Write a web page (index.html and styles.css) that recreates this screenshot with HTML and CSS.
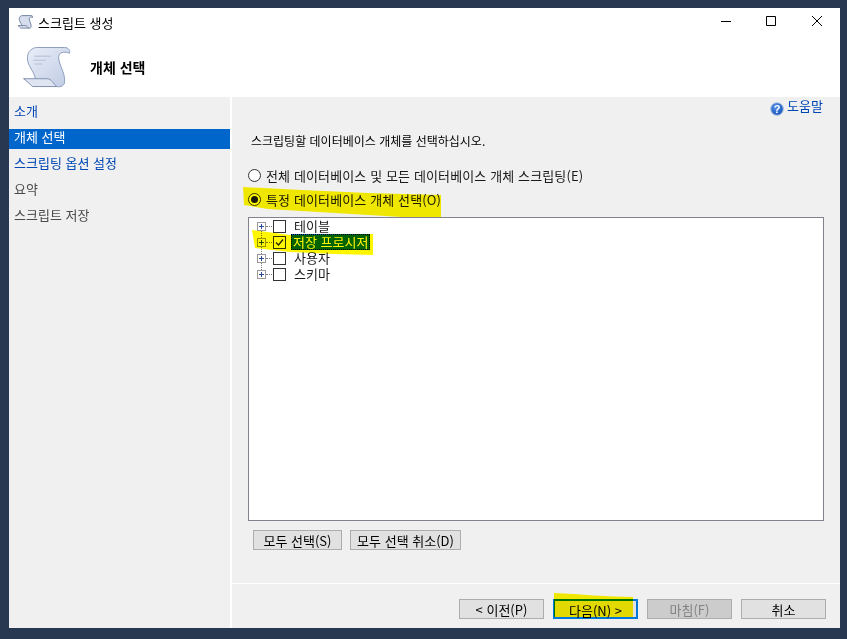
FILE: index.html
```html
<!DOCTYPE html>
<html lang="ko">
<head>
    <meta charset="UTF-8">
    <meta name="viewport" content="width=device-width, initial-scale=1.0">
    <title>스크립트 생성</title>
    <link rel="stylesheet" href="styles.css">
</head>
<body>

    <div class="window">
        <!-- Title bar -->
        <div class="titlebar">
            <svg class="title-icon" width="15" height="14" viewBox="0 0 48 41">
                <path d="M14 0 H42 C46 0 48 3 47 6 C44 4 37 4 36 9 C35 16 43 26 42 35 C42 39 38 41 34 40 L12 32 C11 24 3 18 4 10 C4 4 9 0 14 0 Z" fill="#d6deee" stroke="#6f7f9f" stroke-width="3"/>
                <path d="M0 32 H24 C29 32 30 37 34 40 H9 C6 37 3 34 0 32 Z" fill="#dfe6f2" stroke="#6f7f9f" stroke-width="3"/>
            </svg>
            <span class="title-text">스크립트 생성</span>
            <div class="win-buttons">
                <svg width="12" height="12" viewBox="0 0 12 12"><path d="M2 5.5 H12" stroke="#000"/></svg>
                <svg width="12" height="12" viewBox="0 0 12 12"><path d="M1.5 0.5 H10.5 V9.5 H1.5 Z" stroke="#000" fill="none"/></svg>
                <svg width="12" height="12" viewBox="0 0 12 12"><path d="M1 0 L11 10 M11 0 L1 10" stroke="#000" fill="none"/></svg>
            </div>
        </div>

        <!-- Page header -->
        <div class="page-header">
            <svg class="header-icon" width="48" height="41" viewBox="-0.5 -0.5 49 42">
                <defs>
                    <linearGradient id="paper" x1="0" y1="0" x2="1" y2="1">
                        <stop offset="0" stop-color="#e9eef8"/>
                        <stop offset="1" stop-color="#bfcbe3"/>
                    </linearGradient>
                </defs>
                <path d="M14 0 H42 C46 0 48 3 47 6 C44 4 37 4 36 9 C35 16 43 26 42 35 C42 39 38 41 34 40 L12 32 C11 24 3 18 4 10 C4 4 9 0 14 0 Z" fill="url(#paper)" stroke="#8d9cbc"/>
                <path d="M0 32 H24 C29 32 30 37 34 40 H9 C6 37 3 34 0 32 Z" fill="#dfe6f2" stroke="#7f8fb0"/>
                <path d="M11 9 H28 M10 13 H23 M11 17 H19" stroke="#c2cbdd" stroke-width="1.5"/>
            </svg>
            <span class="header-title">개체 선택</span>
        </div>

        <div class="main">
            <!-- Step list -->
            <div class="sidebar">
                <div class="step link">소개</div>
                <div class="step selected">개체 선택</div>
                <div class="step link">스크립팅 옵션 설정</div>
                <div class="step">요약</div>
                <div class="step">스크립트 저장</div>
            </div>

            <div class="content">
                <div class="content-body">
                    <div class="help-row">
                        <svg class="help-icon" width="14" height="14" viewBox="0 0 14 14">
                            <defs>
                                <radialGradient id="orb" cx="0.4" cy="0.35" r="0.7">
                                    <stop offset="0" stop-color="#4f8fe8"/>
                                    <stop offset="1" stop-color="#1c55b8"/>
                                </radialGradient>
                            </defs>
                            <circle cx="7" cy="7" r="6.3" fill="url(#orb)" stroke="#a9c0e4"/>
                            <text x="7" y="10.5" class="help-mark">?</text>
                        </svg>
                        <span class="help-text">도움말</span>
                    </div>
                    <p class="prompt">스크립팅할 데이터베이스 개체를 선택하십시오.</p>

                    <label class="radio-row">
                        <span class="radio"></span>전체 데이터베이스 및 모든 데이터베이스 개체 스크립팅(E)
                    </label>
                    <label class="radio-row">
                        <span class="radio checked"></span>특정 데이터베이스 개체 선택(O)
                    </label>

                    <div class="tree">
                        <div class="tree-row"><span class="expander"></span><span class="dots"></span><span class="check"></span><span class="node">테이블</span></div>
                        <div class="tree-row"><span class="expander"></span><span class="dots"></span><span class="check on">
                            <svg width="13" height="13" viewBox="0 0 13 13"><path d="M3 6.5 L5.5 9 L10 3.5" stroke="#222" stroke-width="1.3" fill="none"/></svg>
                        </span><span class="node picked">저장 프로시저</span></div>
                        <div class="tree-row"><span class="expander"></span><span class="dots"></span><span class="check"></span><span class="node">사용자</span></div>
                        <div class="tree-row last"><span class="expander"></span><span class="dots"></span><span class="check"></span><span class="node">스키마</span></div>
                    </div>

                    <div class="select-buttons">
                        <button class="btn select-all">모두 선택(S)</button>
                        <button class="btn select-none">모두 선택 취소(D)</button>
                    </div>
                </div>

                <div class="footer">
                    <button class="btn wide">&lt; 이전(P)</button>
                    <button class="btn wide default">다음(N) &gt;</button>
                    <button class="btn wide disabled">마침(F)</button>
                    <button class="btn wide">취소</button>
                </div>
            </div>
        </div>

        <!-- Yellow marker strokes drawn over the dialog -->
        <svg class="marker" width="831" height="620" viewBox="0 0 831 620">
            <path d="M234 179 L293 182 L359 185 L432 187 L432 209 L393 209 L326 205 L259 201 L235 197 Z"/>
            <path d="M243 222 L281 227 L364 226 L364 247 L326 246 L281 244 L246 240 Z"/>
            <path d="M545 585 C570 586 600 589 624 589 L624 609 L545 609 Z"/>
        </svg>
    </div>

</body>
</html>
```

FILE: styles.css
```css
body {
    margin: 0;
    background-color: #283850;
    font-family: "Noto Sans CJK KR", "Liberation Sans", sans-serif;
    font-size: 13px;
    color: #1a1a1a;
}
.window {
    position: relative;
    width: 831px;
    height: 620px;
    margin: 8px 0 0 9px;
    background-color: #ffffff;
    display: flex;
    flex-direction: column;
}
.titlebar {
    height: 28px;
    display: flex;
    align-items: center;
    padding-left: 9px;
}
.title-icon {
    margin-right: 5px;
}
.title-text {
    color: #000000;
}
.win-buttons {
    margin-left: auto;
    display: flex;
    gap: 34px;
    padding-right: 17px;
}
.win-buttons svg {
    display: block;
}
.page-header {
    height: 61px;
    display: flex;
    align-items: center;
    padding-left: 14px;
}
.header-icon {
    margin-top: 1px;
}
.header-title {
    margin-left: 19px;
    font-size: 14px;
    font-weight: bold;
    color: #000000;
}
.main {
    flex: 1;
    display: flex;
    gap: 2px;
    min-height: 0;
}
.sidebar {
    width: 221px;
    background-color: #f0f0f0;
    padding-top: 4px;
    display: flex;
    flex-direction: column;
}
.step {
    height: 20px;
    line-height: 19px;
    margin-bottom: 6px;
    padding-left: 5px;
    color: #4a4a4a;
}
.step.link {
    color: #0046b4;
}
.step.selected {
    margin-top: 2px;
    margin-bottom: 4px;
    background-color: #0066cc;
    color: #ffffff;
    line-height: 16px;
}
.content {
    flex: 1;
    background-color: #f0f0f0;
    display: flex;
    flex-direction: column;
}
.content-body {
    flex: 1;
    padding: 0 16px;
    border-bottom: 1px solid #ffffff;
}
.help-row {
    display: flex;
    justify-content: flex-end;
    align-items: center;
    gap: 3px;
    height: 20px;
    margin-top: 1px;
    margin-bottom: 15px;
    padding-right: 1px;
}
.help-icon {
    margin-top: 2px;
}
.help-text {
    margin-top: -2px;
    margin-bottom: 4px;
    color: #0046b4;
}
.help-mark {
    font-family: "Liberation Sans", sans-serif;
    font-size: 11px;
    font-weight: bold;
    fill: #ffffff;
    text-anchor: middle;
}
.prompt {
    margin: 0 0 15px 3px;
    font-size: 12px;
    line-height: 16px;
    color: #000000;
}
.radio-row {
    display: flex;
    align-items: center;
    height: 24px;
    box-sizing: border-box;
    padding-bottom: 2px;
    letter-spacing: 0.12px;
    color: #1a1a1a;
}
.radio {
    width: 11px;
    height: 11px;
    border: 1px solid #333333;
    border-radius: 50%;
    background-color: #ffffff;
    margin-top: 1px;
    margin-right: 5px;
    position: relative;
}
.radio.checked::after {
    content: "";
    position: absolute;
    left: 2px;
    top: 2px;
    width: 7px;
    height: 7px;
    border-radius: 50%;
    background-color: #1a1a1a;
}
.tree {
    height: 302px;
    margin-top: 5px;
    background-color: #ffffff;
    border: 1px solid #82828c;
    padding-left: 8px;
}
.tree-row {
    display: flex;
    align-items: center;
    height: 16px;
}
.expander {
    position: relative;
    width: 7px;
    height: 7px;
    border: 1px solid #9a9a9a;
    background:
        linear-gradient(#2b4a90, #2b4a90) center / 5px 1px no-repeat,
        linear-gradient(#2b4a90, #2b4a90) center / 1px 5px no-repeat;
}
.expander::after {
    content: "";
    position: absolute;
    left: 3px;
    top: 8px;
    height: 7px;
    border-left: 1px dotted #808080;
}
.tree-row.last .expander::after {
    display: none;
}
.dots {
    width: 6px;
    border-top: 1px dotted #808080;
    margin-right: 1px;
}
.check {
    width: 11px;
    height: 11px;
    border: 1px solid #333333;
    background-color: #ffffff;
    display: flex;
}
.check svg {
    flex: none;
    margin: -1px;
}
.node {
    margin-left: 5px;
    padding: 0 3px;
    line-height: 16px;
    height: 16px;
    color: #1a1a1a;
}
.node.picked {
    margin-left: 5px;
    padding: 0 2px;
    background-color: #0066cc;
    color: #ffffff;
    outline: 1px dotted #000000;
    outline-offset: -1px;
}
.select-buttons {
    display: flex;
    gap: 8px;
    margin: 9px 0 0 5px;
}
.btn {
    font-family: inherit;
    font-size: 13px;
    height: 20px;
    padding: 0 0 2px;
    background-color: #e1e1e1;
    border: 1px solid #adadad;
    color: #000000;
}
.select-all {
    width: 89px;
}
.select-none {
    width: 111px;
}
.footer {
    height: 44px;
    display: flex;
    justify-content: flex-end;
    gap: 9px;
    padding: 15px 14px 0 0;
    box-sizing: border-box;
}
.btn.wide {
    width: 85px;
}
.btn.default {
    border: 2px solid #0078d7;
}
.btn.disabled {
    background-color: #cccccc;
    color: #838383;
}
.marker {
    position: absolute;
    left: 0;
    top: 0;
    pointer-events: none;
    mix-blend-mode: multiply;
}
.marker path {
    fill: #fff600;
}
```
